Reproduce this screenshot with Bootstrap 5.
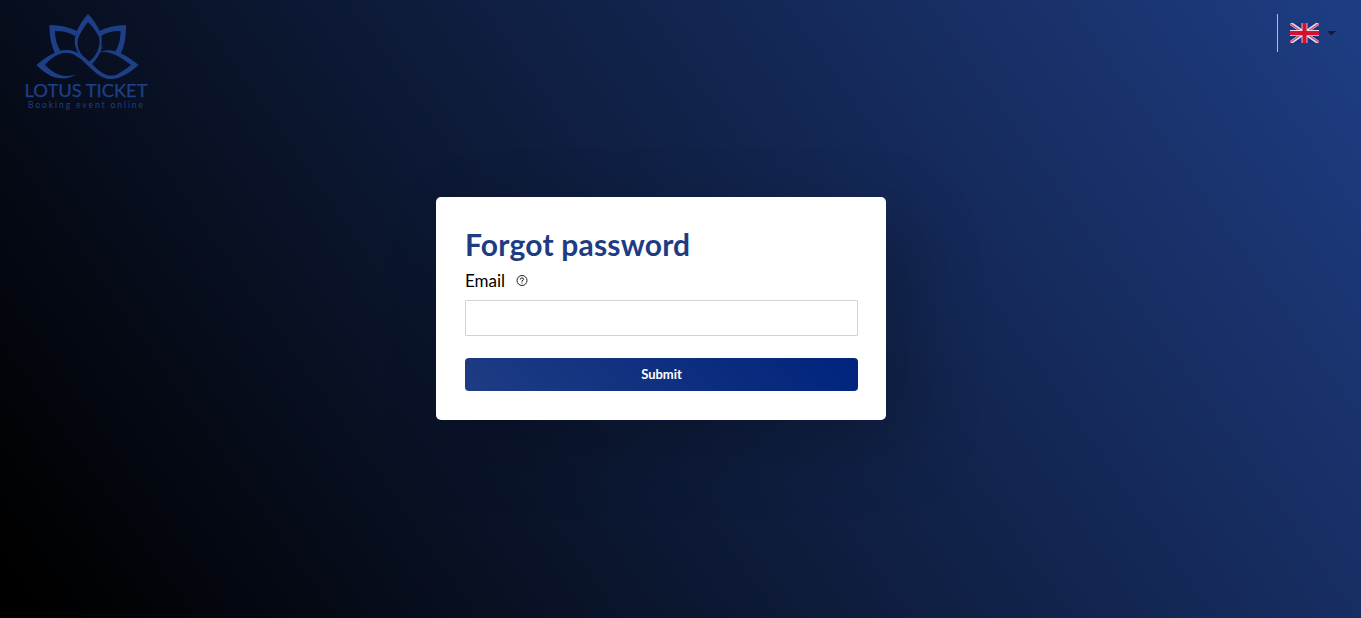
<!DOCTYPE html>
<html lang="en">
<head>
<meta charset="utf-8">
<meta name="viewport" content="width=device-width, initial-scale=1">
<title>Lotus Ticket - Forgot password</title>
<link href="https://cdn.jsdelivr.net/npm/bootstrap@5.3.0/dist/css/bootstrap.min.css" rel="stylesheet">
<style>
  body { font-family: "Lato", "Liberation Sans", sans-serif; color: #000; background: linear-gradient(55deg, #000 3%, #1e3c81 98%) no-repeat; height: 100vh; overflow: hidden; }
  .site-head { height: 197px; padding: 8px 25px 0 18px; }
  .lang-switch { height: 38px; margin-top: 6px; border-left: 1px solid #b9bcc2; padding-left: 12px; gap: 8px; color: #141c33; }
  .auth-panel { width: 450px; height: 223px; margin-left: 436px; padding: 28px 28px 29px 29px; border: 0; border-radius: 5px; box-shadow: 24px 24px 72px rgba(0,0,0,.22); }
  .auth-title { font: 700 30px/38px "Lato", sans-serif; color: #1e3c83; letter-spacing: .2px; }
  .auth-label { font-size: 17px; line-height: 22px; margin-top: 7px; gap: 11px; }
  .auth-input { height: 36px; margin-top: 8px; border: 1px solid #d3d3d5; border-radius: 1px; }
  .auth-submit { height: 33px; margin-top: 22px; padding: 0; color: #fff; border: 0; border-radius: 4px; font-size: 13px; font-weight: 700; background: linear-gradient(45deg, #1e3c83, #00247d); }
</style>
</head>
<body>
<header class="site-head d-flex justify-content-between align-items-start">
  <a href="#" aria-label="Lotus Ticket">
    <svg class="d-block" width="140" height="108" viewBox="18 8 140 108" fill="#1e3f87">
      <path fill-rule="evenodd" d="M88 14C93 19 98 26 101 34C104 46 98 58 89 65L86 63C75 52 73 43 76 33C79 26 83 19 88 14ZM88 22C84 27 80 33 78 39C76 48 81 55 89 63C97 55 101 46 99 37C96 31 92 26 88 22Z"/>
      <path d="M49.500 25C60 25 69 27 77 31L75 36C69 32 62 31 55 31C55 39 57 46 61 52L56 55C51 46 49.500 36 49.500 25Z"/>
      <path d="M126 25C116 25 107 27 99 31L101 36C107 32 114 31 120.500 31C120.500 39 119 46 115 52L120 55C125 46 126 36 126 25Z"/>
      <path d="M36.500 65C47 56 57 50 67 50C78 50 86 58 94 66C102 74 108 77 116 75C122 72 127 68 131 65C122 58 114 53 105 52C102 52 100 52 98 53C107 48 117 50 126 56C131 59 135 62 138.500 65C131 72 122 78 112 79C101 80 93 70 84 62C75 54 68 51 60 54C54 56 49 60 45 65C54 74 64 79 77 74C66 81 54 79 46 73C42 70 39 68 36.500 65Z"/>
      <path d="M86 64Q96 57 100 48L103 45Q99 58 90 66Z"/>
      <text x="24.500" y="96.500" textLength="123" lengthAdjust="spacingAndGlyphs" font-family="Lato, sans-serif" font-size="16.500" stroke="#1e3f87" stroke-width=".25">LOTUS TICKET</text>
      <text x="28" y="108.400" textLength="115" font-family="Lato, sans-serif" font-size="8.500">Booking event online</text>
    </svg>
  </a>
  <div class="lang-switch d-flex align-items-center" role="button" aria-label="Language">
    <svg width="29" height="20" viewBox="0 0 60 40" preserveAspectRatio="none">
      <path fill="#14358a" d="M0 0H60V40H0Z"/>
      <path stroke="#dfe2ee" stroke-width="7" d="M0 0L60 40M60 0L0 40"/>
      <path stroke="#d95267" stroke-width="3" d="M0 1L28 20M32 20L60 39M60 1L32 20M28 20L0 39"/>
      <path stroke="#e9d8e2" stroke-width="12" d="M30 0V40M0 20H60"/>
      <path stroke="#d50f30" stroke-width="8.500" d="M30 0V40M0 20H60"/>
    </svg>
    <svg width="9" height="5" viewBox="0 0 9 5"><path fill="currentColor" d="M0 0H9L4.500 4.600Z"/></svg>
  </div>
</header>
<main class="card auth-panel">
  <form>
    <h1 class="auth-title m-0">Forgot password</h1>
    <label for="email" class="auth-label d-flex align-items-center">Email
      <svg width="12" height="12" viewBox="0 0 12 12" fill="none" stroke="#222" stroke-width="1"><circle cx="6" cy="5.500" r="5"/><path d="M4.400 4.500Q4.400 2.900 6 2.900T7.600 4.400Q7.600 5.200 6 5.700V6.700M6 7.500V8.500"/></svg>
    </label>
    <input id="email" type="email" class="auth-input form-control shadow-none">
    <button type="button" class="auth-submit btn w-100 d-flex align-items-center justify-content-center">Submit</button>
  </form>
</main>
<script src="https://cdn.jsdelivr.net/npm/bootstrap@5.3.0/dist/js/bootstrap.bundle.min.js"></script>
</body>
</html>
